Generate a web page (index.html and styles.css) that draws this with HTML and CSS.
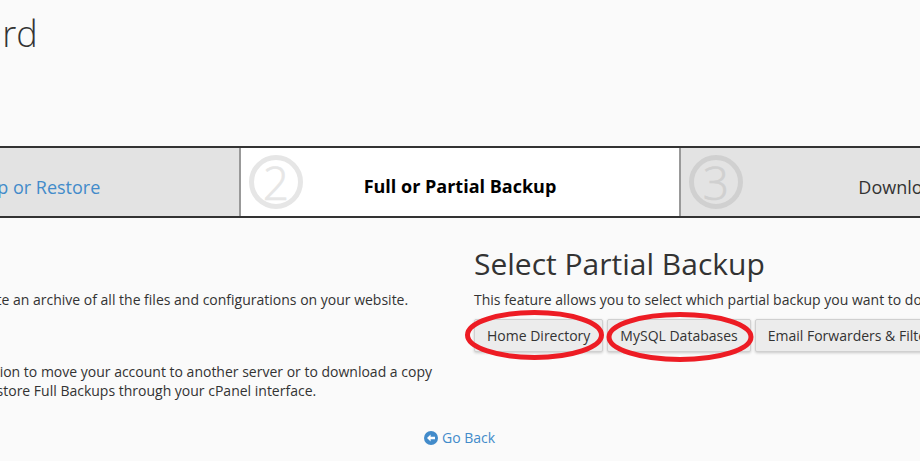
FILE: index.html
```html
<!DOCTYPE html>
<html lang="en">
<head>
<meta charset="utf-8">
<title>Backup Wizard</title>
<link rel="stylesheet" href="styles.css">
</head>
<body>
<div class="viewport">
  <div class="page">
    <h1 class="title">Backup Wizard</h1>
    <div class="steps">
      <div class="step">
        <span class="num">1</span>
        <a class="step-label link">Back Up or Restore</a>
      </div>
      <div class="step active">
        <span class="num">2</span>
        <span class="step-label strong">Full or Partial Backup</span>
      </div>
      <div class="step">
        <span class="num">3</span>
        <span class="step-label">Download</span>
      </div>
    </div>
    <div class="columns">
      <section class="col">
        <h2 class="heading">Full Backup</h2>
        <p class="para">This feature allows you to create an archive of all the files and configurations on your website.</p>
        <div class="btns"><button class="btn">Full Backup</button></div>
        <p class="para wrap">Note: You can only use this option to move your account to another server or to download a copy of your website. You cannot restore Full Backups through your cPanel interface.</p>
      </section>
      <section class="col">
        <h2 class="heading">Select Partial Backup</h2>
        <p class="para">This feature allows you to select which partial backup you want to download.</p>
        <div class="btns">
          <button class="btn">Home Directory</button>
          <button class="btn">MySQL Databases</button>
          <button class="btn">Email Forwarders &amp; Filters</button>
        </div>
      </section>
    </div>
    <div class="back">
      <a class="back-link">
        <svg class="back-icon" viewBox="0 0 14 14" aria-hidden="true"><circle cx="7" cy="7" r="7" fill="#428bca"/><path d="M3 7l3.600-3.400v2.200H11v2.400H6.600v2.200z" fill="#fff"/></svg>
        Go Back
      </a>
    </div>
  </div>
  <svg class="marks" viewBox="0 0 920 461" aria-hidden="true">
    <ellipse cx="534.500" cy="335" rx="67" ry="22.500"/>
    <ellipse cx="680" cy="337" rx="71" ry="22.500"/>
  </svg>
</div>
</body>
</html>
```
FILE: styles.css
```css
* { box-sizing: border-box; }
html, body { margin: 0; padding: 0; }
body {
  background: #fafafa;
  font-family: "Open Sans", sans-serif;
  font-size: 14px;
  line-height: 20px;
  color: #333;
}
.viewport {
  position: relative;
  width: 920px;
  height: 461px;
  overflow: hidden;
}
.page {
  width: 1320px;
  margin-left: -201px;
}
.title {
  margin: 0 0 0 -16px;
  height: 146px;
  padding: 10px 0 0 15px;
  font-size: 36px;
  line-height: 48px;
  font-weight: 300;
  color: #333;
}
.steps {
  display: flex;
  height: 72px;
  border-top: 2px solid #333;
  border-bottom: 2px solid #333;
}
.step {
  position: relative;
  flex: 0 0 440px;
  background: #e3e3e3;
  border-left: 2px solid #999;
  display: flex;
  align-items: center;
  justify-content: center;
  font-size: 18px;
}
.step:first-child { border-left: 0; }
.step.active { background: #fff; }
.num {
  position: absolute;
  left: 8px;
  top: 7px;
  width: 54px;
  height: 54px;
  border: 5px solid #d0d0d0;
  border-radius: 50%;
  display: flex;
  align-items: center;
  justify-content: center;
  font-size: 46px;
  font-weight: 300;
  line-height: 1;
  color: #d0d0d0;
  -webkit-text-stroke: 0.6px currentColor;
}
.active .num { border-color: #e6e6e6; color: #e6e6e6; }
.step-label { position: relative; top: 5px; left: 1px; }
.link { color: #428bca; }
.strong { top: 4px; left: 0; font-size: 18px; font-weight: 700; color: #000; }
.columns {
  display: flex;
  margin-left: -16px;
}
.col {
  flex: 0 0 660px;
  padding: 0 15px;
}
.col:first-child { flex-basis: 676px; }
.heading {
  margin: 26px 0 6px;
  font-size: 30px;
  line-height: 40px;
  font-weight: 400;
  color: #333;
}
.para { margin: 0; }
.btns {
  display: flex;
  gap: 4px;
  margin-top: 9px;
}
.btn {
  height: 33px;
  padding: 0 12px;
  border: 1px solid #d0d0d0;
  border-radius: 2px;
  background: #ececec;
  box-shadow: 0 1px 3px rgba(0,0,0,.2);
  font: 14px/20px "Open Sans", sans-serif;
  color: #333;
  white-space: nowrap;
}
.wrap { margin-top: 11px; line-height: 18.5px; }
.back {
  position: absolute;
  left: 424px;
  top: 428px;
}
.back-link {
  display: flex;
  align-items: center;
  gap: 4px;
  color: #428bca;
}
.back-icon { width: 14px; height: 14px; }
.marks {
  position: absolute;
  left: 0;
  top: 0;
  width: 920px;
  height: 461px;
  pointer-events: none;
}
.marks ellipse {
  fill: none;
  stroke: #ed1c24;
  stroke-width: 5;
}
```
